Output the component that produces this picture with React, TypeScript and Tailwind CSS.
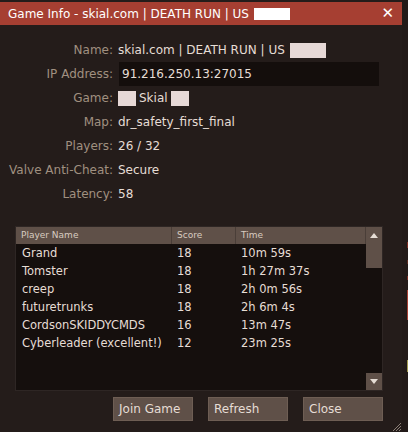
import React from "react";

const players = [
  ["Grand", "18", "10m 59s"],
  ["Tomster", "18", "1h 27m 37s"],
  ["creep", "18", "2h 0m 56s"],
  ["futuretrunks", "18", "2h 6m 4s"],
  ["CordsonSKIDDYCMDS", "16", "13m 47s"],
  ["Cyberleader (excellent!)", "12", "23m 25s"],
];

function Row({ label, children }: { label: string; children: React.ReactNode }) {
  return (
    <div className="flex items-center h-[24px]">
      <div className="w-[113px] text-right text-[#a09080] whitespace-nowrap">{label}:</div>
      <div className="flex-1 flex items-center text-[#e6ddd5] pl-[5px] whitespace-nowrap">{children}</div>
    </div>
  );
}

export default function App() {
  return (
    <div
      className="w-[408px] h-[432px] bg-[#221a18] flex overflow-hidden text-[12px]"
      style={{ fontFamily: '"DejaVu Sans", Verdana, sans-serif' }}
    >
      <div className="w-[402px] h-full bg-[#241c1a] flex flex-col relative">
        <div className="h-[2px] bg-[#241c1a]" />
        <div className="h-[23px] bg-[#a63f32] flex items-center pl-[8px] pr-[8px] text-white text-[12px]">
          <span className="whitespace-nowrap">Game Info - skial.com | DEATH RUN | US</span>
          <span className="inline-block w-[36px] h-[12px] bg-white ml-[5px]" />
          <span className="ml-auto text-[15px] font-bold leading-none">✕</span>
        </div>
        <div className="pt-[13px] flex flex-col">
          <Row label="Name">
            <span>skial.com | DEATH RUN | US</span>
            <span className="inline-block w-[36px] h-[15px] bg-[#e6d8d6] ml-[5px]" />
          </Row>
          <Row label="IP Address">
            <div className="w-[260px] h-[24px] bg-[#140e0c] flex items-center pl-[3px] ml-[1px]">91.216.250.13:27015</div>
          </Row>
          <Row label="Game">
            <span className="inline-block w-[18px] h-[15px] bg-[#e6d8d6] mr-[3px]" />
            <span>Skial</span>
            <span className="inline-block w-[18px] h-[15px] bg-[#e6d8d6] ml-[3px]" />
          </Row>
          <Row label="Map">dr_safety_first_final</Row>
          <Row label="Players">26 / 32</Row>
          <Row label="Valve Anti-Cheat">Secure</Row>
          <Row label="Latency">58</Row>
        </div>
        <div className="mt-[20px] ml-[15px] w-[368px] h-[165px] bg-[#150f0d] border border-[#2e2624] flex flex-col">
          <div className="flex h-[17px] bg-[#5f5048] text-[#d8ccc0] text-[9px]">
            <div className="w-[156px] pl-[5px] flex items-center border-r border-[#4a3e38]">Player Name</div>
            <div className="w-[64px] pl-[5px] flex items-center border-r border-[#4a3e38]">Score</div>
            <div className="flex-1 pl-[5px] flex items-center border-r border-[#4a3e38]">Time</div>
            <div className="w-[16px] flex items-center justify-center">
              <svg width="8" height="5" viewBox="0 0 8 5"><path d="M4 0 L8 5 L0 5 Z" fill="#e6ddd5" /></svg>
            </div>
          </div>
          <div className="flex flex-1">
            <div className="flex-1 pt-[1px] text-[#e6ddd5] text-[11.5px]">
              {players.map((p) => (
                <div key={p[0]} className="flex h-[18px] items-center whitespace-nowrap">
                  <div className="w-[156px] pl-[6px]">{p[0]}</div>
                  <div className="w-[64px] pl-[5px]">{p[1]}</div>
                  <div className="flex-1 pl-[5px]">{p[2]}</div>
                </div>
              ))}
            </div>
            <div className="w-[16px] flex flex-col bg-[#150f0d]">
              <div className="h-[24px] bg-[#5f5048]" />
              <div className="flex-1" />
              <div className="h-[17px] bg-[#5f5048] flex items-center justify-center">
                <svg width="8" height="5" viewBox="0 0 8 5"><path d="M0 0 L8 0 L4 5 Z" fill="#e6ddd5" /></svg>
              </div>
            </div>
          </div>
        </div>
        <div className="flex mt-[6px] pl-[113px] gap-[15px]">
          <div className="w-[80px] h-[24px] bg-[#5f5048] border border-[#6e5e54] text-[#e6ddd5] flex items-center pl-[5px]">Join Game</div>
          <div className="w-[80px] h-[24px] bg-[#5f5048] border border-[#6e5e54] text-[#e6ddd5] flex items-center pl-[5px]">Refresh</div>
          <div className="w-[80px] h-[24px] bg-[#5f5048] border border-[#6e5e54] text-[#e6ddd5] flex items-center pl-[5px]">Close</div>
        </div>
        <svg className="absolute right-[1px] bottom-[1px]" width="8" height="9" viewBox="0 0 8 9">
          <path d="M8 1 L0 9 M8 4 L3 9 M8 7 L6 9" stroke="#8a7e76" strokeWidth="1" />
        </svg>
      </div>
      <div className="w-[6px] h-full flex">
        <div className="w-[5px] h-full bg-[#221a18]" />
        <div className="w-[1px] h-full flex flex-col">
          <div className="h-[242px]" />
          <div className="h-[6px] bg-[#7a2a20]" />
          <div className="h-[12px]" />
          <div className="h-[4px] bg-[#5a2a20]" />
          <div className="h-[12px]" />
          <div className="h-[4px] bg-[#7a2a20]" />
          <div className="h-[10px]" />
          <div className="h-[30px] bg-[#a63f32]" />
          <div className="h-[40px]" />
          <div className="h-[12px] bg-[#a09a50]" />
        </div>
      </div>
    </div>
  );
}
